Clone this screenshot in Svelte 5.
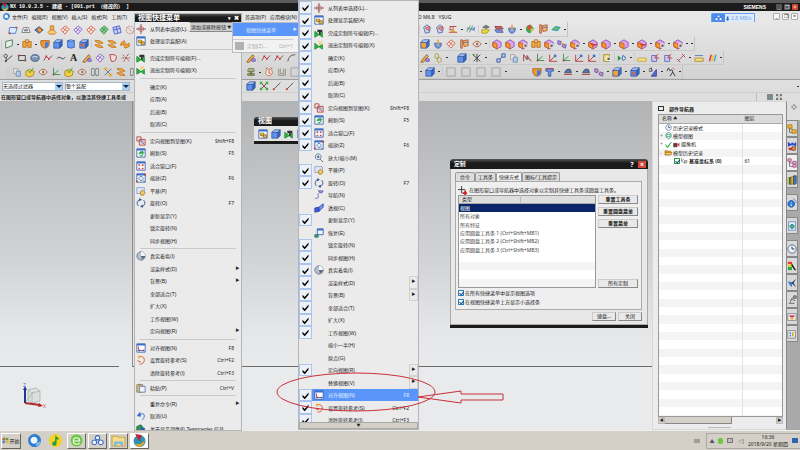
<script>
  const cube = (front, top, side) => [
    ['M1 4h7v7H1z', front, '#3c5c9c'],
    ['M1 4l3-3h7L8 4z', top, '#3c5c9c'],
    ['M8 4l3-3v7l-3 3z', side, '#3c5c9c'],
  ];
  const warm = [
    ['M1 4l5-3 5 3v5l-5 3-5-3z', '#d9a5ea', '#8a4fb0'],
    ['M1 4l5 2v6L1 9z', '#f79a2c', '#c25a18'],
  ];
  const sheet = (fill, line) => [['M1 6l5-5 5 4-5 6z', fill, line], ['M3.500 3.500l5 4M8 3l-4.500 5.500', '', line]];
  const win = [['M1 1h10v10H1z', '#fff', '#345ba6'], ['M1 1h10v2H1z', '#3d6fd0', '']];

  // shapes are [path, fill, stroke] on a 12 x 12 grid
  const icons = {
    sketch: [['M2 3h9L9 10H1z', '#dbeaff', '#3e73c4'], ['M1 9h2v2H1zM9 2h2v2H9z', '#d33', '']],
    dome: [['M1 9l2-6h6l2 6z', '#eee', '#777'], ['M4 7a2 2 0 0 1 4 0z', '#9db8d8', '#668']],
    diamond: [['M1 6l5-4 5 4-5 4z', '#4c82d6', '#2d4c94'], ['M5 3l5 3-3 3-3-3z', '#f2a33a', '#c46a1a']],
    stand: [['M4 1h4v6H4z', '#f5b14a', '#c07522'], ['M1 9l3-3h4l3 3-2 2H3z', '#f7cc7a', '#c07522']],
    mesh: sheet('#e6e9ff', '#8457b8'),
    redmesh: sheet('#ffe8dc', '#c95a4a'),
    green: sheet('#8ad08e', '#2d8a46'),
    blueGrid: [['M1 3l8-2 2 8-8 2z', '#c9d4ff', '#4a55c0'], ['M2 6l8-2M5 2l2 8', '', '#4a55c0']],
    ring: [['M6 1.500a4.500 4.500 0 1 0 .1 0zM2 2l8 8', '', '#d0665a', '2 1']],
    plane: [['M2 3l8-2v7l-8 3z', '#e6f2e6', '#3d6a50']],
    orange: [['M1 3h4v7H1zM7 3h4v7H7z', '#f7a93c', '#b56a18'], ['M4 1h4v3H4z', '#fbd68a', '#b56a18']],
    shield: [['M1 2h10v3q0 5-5 6-5-1-5-6z', '#f4982e', '#a85a16'], ['M6 4h4v5l-4 2z', '#3f7fe0', '']],
    blue: cube('#5c93ee', '#a9c9fb', '#2f66cc'),
    cyl: [['M2 2h8v8q-4 2-8 0z', '#6aa0f4', '#2f5cb8'], ['M2 2q4-2 8 0-4 2-8 0z', '#cfe1ff', '#2f5cb8']],
    hole: [...cube('#5c93ee', '#a9c9fb', '#2f66cc'), ['M4.500 6a1.500 1.500 0 1 0 .1 0z', '#f09a3a', '#b33']],
    bars: [['M1 2h6l4 3H5zM1 7h6l4 3H5z', '#f6b143', '#ba6c18']],
    bend: [['M1 5l4-3 2 5 4-2v4l-5 2-2-5-3 2z', '#f6a83c', '#ba6c18']],
    lineCircle: [['M2 1.500a2 2 0 1 0 .1 0zM3 5l-1 5 8-7', '', '#333'], ['M1 9h2v2H1z', '#444', '']],
    rect: [['M2 3h8v6H2z', '', '#333'], ['M1 2h2v2H1zM9 8h2v2H9z', '#a33', '']],
    disc: [['M1 6q0-4 5-4t5 4-5 4-5-4z', '#7d93b8', '#3c5078'], ['M3 5q3-2 6 0', '', '#dce6f4']],
    spline: [['M1 9l3-5 3 3 4-4', '', '#8b2f2f'], ['M3 3h2v2H3zM6 6h2v2H6z', '#d23', '']],
    wave: [['M1 7q2-4 5-1t5-1', '', '#333']],
    dshape: [['M2 2q9-1 8 4-1 5-6 4z', '#f5dada', '#a33']],
    cross: [['M2 2l8 8M9 1L3 11M1 6h10', '', '#a14848', '3 1']],
    pen: [['M2 9l6-7 2 2-6 7-3 0z', '#efb04c', '#8a5a2a'], ['M7 7h4v3H7z', '#b9a0e8', '#6b4aa8']],
    copy: [['M2 2h5v6H2z', '#eee', '#999'], ['M5 5h5v6H5z', '#b9cce8', '#6b86b0']],
    box: [['M1 5l4-2 6 2-1 5-5 2-4-2z', '#f5cf45', '#ab8218'], ['M4 4l2 3 4-6', '', '#2aa044']],
    mirror: [['M2 2h3v8H2zM7 2h3v8H7z', '#f2f2f2', '#666']],
    axes: [['M3 1v8h8M3 9l6-5', '', '#2c8a44'], ['M2 8h2v2H2z', '#c33', '']],
    tools: [['M2 2l8 8M10 2l-8 8', '', '#47689c'], ['M1 1h4v3H1zM7 8h4v3H7z', '#eeac3c', '']],
    eye: [['M1 6q5-7 10 0-5 7-10 0z', '#f4dfd0', '#a35a3a'], ['M5 4.500h2.500v3H5z', '#777', '']],
    knot: [['M2 4l4-3 4 3-1 6-5 1z', '#c8d8f4', '#4468b0'], ['M4 5l5-2-1 5z', '#f2a0a0', '#c44']],
    stamp: [['M1 10h10M2 3h8M6 3v6M3 3l-1 4h3', '', '#b33a22'], ['M3 8h6v2H3z', '#e9a23a', '']],
    curves: [['M1 9l4-7M4 10l4-8M1 5l9 2', '', '#3a8c6c'], ['M7 6l4-3-1 6z', '#6a89dc', '']],
    layers: [['M1 4l5-3 5 3-5 2z', '#777', ''], ['M1 7h9l-3 4H1z', '#e9dd3e', '#a89a20']],
    sheets: [['M1 3h8l2 3H3z', '#cf6a6a', '#8a3a3a'], ['M1 7h8l2 3H3z', '#8595d8', '#4a5aa0']],
    vase: [['M2 5h8q0 6-4 6T2 5z', '#6f9fe8', '#3a62b0'], ['M5 1h2v7H5z', '#f0a23a', '']],
    rainbow: [['M1 5q2-5 6-4l4 5-5 5q-5-1-5-6z', '#3ba65a', ''], ['M2 4q2-3 5-3l1 4-3 2z', '#e34a30', ''], ['M7 5l4 1-4 4z', '#f2c736', '']],
    grad: [['M2 1h2v10H2zM5 2l6-1v7l-5 1z', '#f3b46c', '#a8583a'], ['M6 4h5', '', '#466bc0']],
    flat: [['M1 7l4-4 6 1-3 4z', '#58c46a', '#2e8db8']],
    mix: cube('#f0a03c', '#bcd2fa', '#3e6fd0'),
    warm,
    warmDot: [...warm, ['M7 6h4v4H7z', '#666', '#fff']],
    warmRed: [...warm, ['M3 6l7 1M5 9l6-3', '', '#c22']],
    arrows: [['M1 2l4 1-1 4-3-1zM7 6l4 1-1 4-4-2z', '#b09be0', '#6a4aa8'], ['M4 4l5 4', '', '#e08c2c']],
    chain: [['M3 1q4-1 4 2L5 7Q1 6 3 1zM6 5q4 0 4 3 0 4-4 3-2-2 0-6z', '', '#a59f32']],
    axisX: [['M1 2l9 8M10 2L2 10M6 1v10', '', '#333'], ['M1 1h2v2H1z', '#393', '']],
    link: [['M2 10l8-8', '', '#34569c'], ['M1 7h4v4H1zM7 1h4v4H7z', '#b7c9ee', '#34569c']],
    redAxes: [['M2 2v8h9M2 10l6-6', '', '#b62f2f'], ['M7 2h3v3H7z', '#356dd0', '']],
    redZig: [['M2 10V2l4 6V3l5 7', '', '#a8262c'], ['M5 5h3v3H5z', '#777', '']],
    note: [['M2 2h7v8H2z', '#f5e28a', '#998230'], ['M6 5h4v4H6z', '#666', '#fff']],
    play: [['M1 3l4 3-4 4z', '#2a9a48', ''], ['M7 3q4 1 3 4T6 8z', '#dfe6fb', '#34569c']],
    ruler: [['M1 6h10v4H1z', '#f0dc80', '#a88c2a'], ['M1 3h10', '', '#5577c0']],
    yellowRuler: [['M1 6h10v4H1z', '#f0dc80', '#c4ab4a']],
    clockR: [['M2 3h6v7H2z', '#c8cff2', '#6a58b8'], ['M5 6l5-5M6 6h5', '', '#c33']],
    dumb: [['M2 10l8-8M1 7l4 4M7 1l4 4', '', '#a33a58']],
    spectrum: [['M2 10l2-8h2l-2 8z', '#e0413a', ''], ['M5 10l2-8h2l-2 8z', '#eec82c', ''], ['M8 10l2-8h1.500l-2 8z', '#2ca0d0', '']],
    tSurf: [['M1 2h9v3H7v6H4V5H1z', '#6a9ae6', '#34569c'], ['M1 2h9', '', '#c33']],
    swoosh: [['M2 7q2-6 7-4l1 4z', '#4a78b8', '#444'], ['M1 9h10', '', '#b33']],
    measure: [['M1 3L4 1l1 4M1 5h4', '', '#333'], ['M4 11l6-8v8z', '#5b6fd0', '#2c3a94']],
    dim: [['M1 5l2-4 2 4', '', '#333'], ['M5 4q3-2 3 2l3 5M8 6l-3 5', '', '#222'], ['M8 1l2 2', '', '#c33']],
    frame: [['M1 1h10v10H1z', '', '#9c9c9c']],
    gem: [['M3 2h6l1 3-4 1-4-1zM2 10h8V8H2zM5 5h2v4H5z', '#b8c49a', '#5d6e3a']],
    alarm: [['M6 2.500a4 4 0 1 0 .1 0z', '#f6e6d8', '#c0704a'], ['M6 4v3l2 1M2 2l2-1M10 2L8 1', '', '#b33']],
    tray: [['M2 2v8h8V2M4 2v6h4V2', '', '#8c8a6a']],
    line: [['M2 10l8-8', '', '#444'], ['M1 9h2v2H1z', '#b33', '']],
    dots: [['M2 2l8 8M10 2l-8 8', '', '#333'], ['M1 1h3v3H1zM8 1h3v3H8zM1 8h3v3H1zM8 8h3v3H8z', '#46a83c', ''], ['M5 5h2v2H5z', '#c33', '']],
    arc: [['M1 10q1-8 9-8', '', '#444']],
    target: [['M6 0v12M0 6h12', '', '#7a4040'], ['M6 3a3 3 0 1 0 .1 0z', '', '#c05050']],
    asm: [...win, ['M3 5h4v3H3zM6 7h4v3H6z', '#f3c545', '#94701c']],
    finish: [['M1 4v7l5-3 4 3V5L6 8z', '#2fb648', '#1c8a32'], ['M4 2h6v3H8v3H6V5H4z', '#333', '']],
    exit: [['M1 4v7l5-3 4 3V5L6 8z', '#2fb648', '#1c8a32'], ['M5 1l5 5M10 1L5 6', '', '#eec41e']],
    orient: [['M4 4h7v7H4z', '#f7dada', '#b33c3c'], ['M1 1h5v5H1zM6 6l4 4', '', '#b33c3c'], ['M6 5h3v4H6z', '#8fa6d8', '']],
    refresh: [...win, ['M3.500 6.500q1-3 4-2l0-1 2 2-2 2v-1q-2-1-3 1zM8.500 7.500q-1 3-4 2', '#36a852', '#36a852']],
    fit: [...win, ['M3 4h2v2H3zM7 4h2v2H7zM3 8h2v2H3zM7 8h2v2H7z', '#d0453e', '']],
    zoom: [...win, ['M6 4a2.500 2.500 0 1 0 .1 0zM8 9l3 2', '#e4f0fb', '#4a6f98'], ['M0 9h2v2H0zM10 1h2v2h-2z', '#c33', '']],
    lens: [['M5 1a3.500 3.500 0 1 0 .1 0z', '#dfeaf6', '#5874a0'], ['M7 7l4 4', '', '#5a5a6a'], ['M3.500 4.500h3M5 3v3', '', '#345']],
    pan: [['M1 2h9v7H1z', '#dfe8fa', '#8c9cc4'], ['M5 7l3-2 3 3-2 3H6z', '#f2c66a', '#a87f2c']],
    rotate: [['M3 9.500A4.200 4.200 0 0 1 5 2M9 2.500A4.200 4.200 0 0 1 7 10', '', '#24468c'], ['M4 0l3 2-3 2zM8 8l-3 2 3 2z', '#24468c', '']],
    nav: [['M1 10q6 0 4-3t5-5', '', '#6d5fb0'], ['M5 1h6l-2 3z', '#a9a0d8', '#6d5fb0']],
    persp: [['M1 6l5-1v5l-5 1z', '#3f5ee0', '#2a3ea8'], ['M6 5l5-4v4l-5 5z', '#7d95f4', '#2a3ea8']],
    restore: [['M4 1h7v7H4z', '#eef4ff', '#345ba6'], ['M4 1h7v2H4z', '#3d6fd0', ''], ['M1 8h4v3H1z', '#3ba68a', '#24705e']],
    globe: [['M6 1a5 5 0 1 0 .1 0z', '#b7c0cc', '#6c7684'], ['M6 1a5 5 0 0 1 5 5H6z', '#f3f6fa', ''], ['M6 6h5a5 5 0 0 1-4 4z', '#59697e', '']],
    align: [...win, ['M3 4v5h6', '', '#c33'], ['M3 8h2v2H3zM8 8h2v2H8z', '#345ba6', '']],
    spin: [['M3 2q7-1 7 4t-6 5M2 6q0 3 4 2', '', '#d5502a'], ['M2 1h4L3 5z', '#eeb02a', '']],
    paste: [['M1 2h7v9H1z', '#dcc48a', '#8a7234'], ['M4 4h7v7H4z', '#eef3fb', '#5a77b0'], ['M3 1h3v2H3z', '#888', '']],
    undo: [['M3 5q7-4 7 1 0 3-3 5', '', '#2f6ad0'], ['M1 6l4-5 1 6z', '#2f6ad0', '']],
    about: [['M1 3l5-2 3 4-4 6-4-3z', '#2c9c54', '#164'], ['M6 4l5 1-1 6-5-1z', '#2d5cc0', ''], ['M2 7h4v4H3z', '#d33', '']],
    tree: [['M3 2v8h3M3 6h4', '', '#666'], ['M1 1h5v4H1zM6 7h5v4H6z', '#f3b92e', '#a67a18']],
    constraint: [['M1 1l4 3v-2l3 0v2l3-3v6L8 5H5L1 7z', '#2b48c4', ''], ['M2 8h4v3H2z', '#c33', ''], ['M6 7h4v4H6z', '#e8ac26', '#833']],
    part: [['M3 2v8h4M3 6h4', '', '#666'], ['M1 1h4v3H1zM7 4h4v3H7zM7 8h4v3H7z', '#eab6d6', '#a34a82']],
    books: [['M1 3h2v8H1z', '#e0d53a', '#a98'], ['M3 3h2v8H3z', '#3ba03c', '#263'], ['M5 2h3v9H5z', '#f0a820', '#b73'], ['M8 1h3v9l-1 1H8z', '#3d82d8', '#246']],
    info: [['M5 3a4 4 0 1 0 .1 0z', '#2f7ad6', '#1c50a0'], ['M4.500 5h1v1h-1zM4.500 7h1v3h-1z', '#fff', ''], ['M7 1q4 1 4 5', '', '#4c89d8']],
    web: [['M2 1h8v10H2z', '#f2f7ff', '#5b84b8'], ['M6 4a2.500 2.500 0 1 0 .1 0z', '#44b06a', '#2a78b0']],
    clock: [['M6 1a5 5 0 1 0 .1 0z', '#e9f0fa', '#4a648c'], ['M6 3v3h3', '', '#223']],
    palette: [['M1 1h5v3H1z', '#e33', ''], ['M1 4h5v3H1z', '#f1dc22', ''], ['M1 7h5v4H1z', '#2aa84a', ''], ['M6 3l5 8H9L5 5z', '#222', '']],
    cut: [['M1 4l5 1v6L3 8z', '#3f7bd0', ''], ['M5 6l6-5-3 5 3 5z', '#27456f', '']],
    robot: [['M2 10h7M4 9l1-4 4-3M5 5l5 2', '', '#5c5c5c'], ['M8 1h3v3H8z', '#aaa', '#555']],
    role: [['M1 2h10v8H1z', '#f7f7f7', '#777'], ['M3 4h6v2H3z', '#c33a6c', ''], ['M4 6h4v3H4z', '#e8b04a', '']],
    sheetList: [['M1 2h9v9H1z', '#f7f7f7', '#777'], ['M3 4h2v2H3zM3 7h2v2H3z', '#3a84d0', ''], ['M6 4h2v5H6z', '#e2a030', '']],
    gear: [['M6 2.500a3.500 3.500 0 1 0 .1 0z', '', '#444'], ['M6 0v2M6 10v2M0 6h2M10 6h2', '', '#444']],
    check: [['M1 6l3 4 7-8-6 9h-1z', '#22a636', '#22a636']],
    camera: [['M1 4h6v6H1z', '#7a3a44', '#422'], ['M7 6l4-3v7z', '#c04a4a', '']],
    folder: [['M0 3h4l1 1h5v6H0z', '#e8a21e', '#96640c'], ['M2 6h10l-2 4H0z', '#fcd666', '#96640c']],
    viewTree: [['M6 1a5 5 0 1 0 .1 0z', '#d8f2e4', '#2a9468'], ['M3 4h6v4H3z', '', '#287']],
    csys: [['M1 1v6l6 4M1 7l4-4', '', '#555'], ['M6 6h4v4H6z', '#ccc', '#666']],
    windows: [['M1 2l4-1v4L1 6z', '#d9532c', ''], ['M6 1l5 1v4L6 5z', '#5ba63a', ''], ['M1 7l4-1v4l-4 1z', '#3d7cd0', ''], ['M6 6l5 1v4l-5-1z', '#f2b824', '']],
    browser: [['M6 0a6 6 0 1 0 .1 0z', '#2d7fd4', ''], ['M5.500 2.500a3.200 3.200 0 1 0 .1 0z', '#f2f7fc', ''], ['M8 8q3 0 4-2-1 5-5 5z', '#7cc3f4', '']],
    music: [['M6 0a6 6 0 1 0 .1 0z', '#f6d222', ''], ['M6 1q1 2 3 3v1L7 5v4a2 2 0 1 1-1.500-2z', '#219a4c', '']],
    e360: [['M6 .5a5.500 5.500 0 1 0 .1 0z', '#6cc644', ''], ['M3 6.500h6q0-3-3-3t-3 3 3 3q2 0 3-1', '', '#fff']],
    cloud: [['M6 1.500a2 2 0 1 0 .1 0zM3 5.500a2.200 2.200 0 1 0 .1 0zM9 5.500a2.200 2.200 0 1 0 .1 0z', '#fff', '#2d63cc']],
    explorer: [['M0 2h5l1 1h6v8H0z', '#f4dc8a', '#c9a54a'], ['M2 7h8v4H8V9H4v2H2z', '#72bde8', '']],
    nx: [['M6 1a5.500 5.500 0 1 0 .1 0z', '#2c92b4', ''], ['M1 8q6 4 10-3-1 7-6 7z', '#eda61e', ''], ['M2 0l6 1-2 6z', '#c8202c', '']],
  };

  const menuItems = {
    list: ['从列表中选择(L)...', 'target'],
    asm: ['处理显示装配(A)', 'asm'],
    finish: ['完成定制符号编辑(F)...', 'finish'],
    exit: ['退出定制符号编辑(X)', 'exit'],
    ok: ['确定(K)'], apply: ['应用(A)'], back: ['后退(B)'], cancel: ['取消(C)'],
    orientSketch: ['定向视图到草图(K)', 'orient', 'Shift+F8'],
    refresh: ['刷新(S)', 'refresh', 'F5'],
    fit: ['适合窗口(F)', 'fit'],
    zoom: ['缩放(Z)', 'zoom', 'F6'],
    lens: ['放大/缩小(M)', 'lens'],
    pan: ['平移(P)', 'pan'],
    rotate: ['旋转(O)', 'rotate', 'F7'],
    nav: ['导航(N)', 'nav'],
    persp: ['透视(C)', 'persp'],
    update: ['更新显示(Y)'],
    restore: ['恢复(E)', 'restore'],
    lock: ['锁定旋转(N)'],
    sync: ['同步视图(H)'],
    shade: ['真实着色(I)', 'globe'],
    render: ['渲染样式(D)', '', '', true],
    bg: ['背景(B)', '', '', true],
    fitAll: ['全部适合(T)'],
    expand: ['扩大(X)'],
    work: ['工作视图(W)'],
    half: ['缩小一半(H)'],
    origin: ['原点(G)'],
    orient: ['定向视图(R)', '', '', true],
    replace: ['替换视图(V)', '', '', true],
    align: ['对齐视图(N)', 'align', 'F8'],
    setRef: ['设置旋转参考(S)', 'spin', 'Ctrl+F2'],
    clearRef: ['清除旋转参考(I)', '', 'Ctrl+F3'],
    paste: ['粘贴(P)', 'paste', 'Ctrl+V'],
    repeat: ['重复命令(R)', '', '', true],
    undo: ['取消(U)', 'undo'],
    about: ['关于显示部件的 Teamcenter 信息', 'about'],
  };

  let index = 0;
  const shortcutMenu = 'list asm - finish exit - ok apply back cancel - orientSketch refresh fit zoom pan rotate update lock sync = shade render bg fitAll expand work orient - align setRef clearRef = paste = repeat undo about'
    .split(' ')
    .map((key) =>
      key === '-' || key === '=' ? { sep: true, thin: key === '=' } : { item: menuItems[key], tall: index++ % 2 === 0 }
    );

  const unchecked = ['lens', 'nav', 'persp', 'restore', 'half', 'origin', 'replace'];
  let buttonMenu = $state(
    'list asm finish exit ok apply back cancel orientSketch refresh fit zoom lens pan rotate nav persp update restore lock sync shade render bg fitAll expand work half origin orient replace align setRef clearRef'
      .split(' ')
      .map((key) => ({ key, item: menuItems[key], checked: !unchecked.includes(key) }))
  );

  const toolbars = [
    [
      '_ sketch dome diamond stand redmesh mesh redmesh green blueGrid ring',
      'pen mesh green blueGrid',
      '| knot knot stamp . curves | layers sheets vase . rainbow grad flat .',
    ],
    [
      '| plane . orange . shield blue cyl hole | bars bars bend',
      'warm mix blue warm',
      'mix vase redmesh grad eye . | warm warm warmDot orange warmDot arrows warmDot . warmRed warm . warm . warmRed . warmDot . warmDot . .',
    ],
    [
      '| lineCircle rect disc spline wave A pen mesh dshape cross',
      'pen | spline spline arc',
      'pen chain . _ blue | axisX . _ link copy redZig axes redAxes axes redAxes redAxes | note | play . | yellowRuler clockR clockR dumb . ruler spectrum .',
    ],
    [
      '_ | | copy box eye axes box eye mirror tools bars mirror',
      'gem . alarm tray frame',
      '. blue . | [ [ [ [ . = shield tSurf . swoosh . swoosh arrows . mix . hole . measure . dim .',
    ],
  ].map((row) => row.map((group) => group.split(' ')));

  const mainMenu = ['文件(F)', '编辑(E)', '视图(V)', '插入(S)', '格式(R)', '工具(T)'];
  const resourceTabs = ['tree', 'constraint', 'part', 'books', 'info', 'web', 'clock', 'palette', 'cut', 'robot', 'role', 'sheetList'];
  const listRows = ['视图', '所有对象', '所有特征', '应用圆盘工具条 1 (Ctrl+Shift+MB1)', '应用圆盘工具条 2 (Ctrl+Shift+MB2)', '应用圆盘工具条 3 (Ctrl+Shift+MB3)', '', '', '', ''];
  const emptyRows = Array.from({ length: 31 });
  let selected = $state(0);
  let showInMenus = $state(true);
  let showBar = $state(true);
</script>

{#snippet icon(name)}
  <svg class="icon" viewBox="0 0 12 12" aria-hidden="true">
    {#each icons[name] as [d, fill, stroke, dash]}
      <path {d} fill={fill || 'none'} stroke={stroke || 'none'} stroke-dasharray={dash} />
    {/each}
  </svg>
{/snippet}

{#snippet tools(group)}
  {#each group as t}
    {#if t === '.'}<span class="drop"></span>
    {:else if t === '|'}<span class="grip"></span>
    {:else if t === '_'}<span class="gap"></span>
    {:else if t === '='}<span class="space"></span>
    {:else if t === '['}<button class="tool wide" aria-label="frame">{@render icon('frame')}</button>
    {:else if t === 'A'}<button class="tool letter">A</button>
    {:else}<button class="tool" aria-label={t}>{@render icon(t)}</button>
    {/if}
  {/each}
{/snippet}

<div class="screen">
  <header class="titlebar">
    {@render icon('nx')}
    <span class="caption">NX 10.0.3.5 - 建模 - [001.prt （修改的） ]</span>
    <b class="brand">SIEMENS</b>
    <span class="winbtns">
      <button aria-label="minimize">_</button><button aria-label="restore">❐</button><button class="close" aria-label="close">×</button>
    </span>
  </header>

  <nav class="menubar">
    <div class="menus first">
      {@render icon('browser')}
      {#each mainMenu as m}<a href="#menu">{m}</a>{/each}
    </div>
    <div class="menus second"><a href="#menu">首选项(P)</a><a href="#menu">应用模块(N)</a></div>
    <div class="menus"><a href="#menu">D M6.8</a><a href="#menu">YSUG</a></div>
    <div class="speed">
      <span class="cloud">{@render icon('cloud')}</span><i>⬇</i><span>2.8 MB/s</span>
    </div>
    <span class="winbtns light">
      <button aria-label="minimize">_</button><button aria-label="restore">❐</button><button aria-label="close">×</button>
    </span>
  </nav>

  <div class="toolbars">
    {#each toolbars as row}
      <div class="toolbar">
        <div class="left">{@render tools(row[0])}</div>
        <div class="mid">{@render tools(row[1])}</div>
        <div class="right">{@render tools(row[2])}</div>
      </div>
    {/each}
  </div>

  <div class="filters">
    <div class="left">
      <span class="combo"><select aria-label="选择过滤器"><option>无选择过滤器</option></select><b></b></span>
      <span class="combo"><select aria-label="选择范围"><option>整个装配</option></select><b></b></span>
    </div>
    <div class="mid">{@render tools(['blue', 'dots', 'line', 'line', 'arc'])}</div>
    <span class="drop end"></span>
  </div>

  <div class="prompt">
    <b>在图形窗口或导航器中选择对象，以激活其快捷工具条或</b>
    <span class="squares"><i></i><i></i></span>
  </div>

  <main>
    <section class="viewport">
      <div class="part left-part"></div>
      <div class="part right-part"></div>
      <svg class="triad" viewBox="0 0 26 26">
        <path d="M6 6l8-2 4 3v10l-8 2-4-3zM6 6l4 3 8-2M10 9v10" fill="#dcdedf" stroke="#b4bab6" />
        <path d="M3 19l9-12" stroke="#9acb9a" />
        <path d="M3 19V5" stroke="#183c94" stroke-width="2" />
        <path d="M1 6l2-4 2 4z" fill="#183c94" />
        <path d="M3 19l15 2" stroke="#b0272c" stroke-width="2" />
        <path d="M17 19l4 3-5 1z" fill="#b0272c" />
        <text x="1" y="3" fill="#4a78c8">Z</text>
        <text x="21" y="24" fill="#d04a4a">X</text>
      </svg>
    </section>

    <aside class="navigator">
      <h2><i></i>部件导航器</h2>
      <div class="sheet">
        <table>
          <thead><tr><th>名称 <small>▲</small></th><th>图层</th></tr></thead>
          <tbody>
            <tr><td><span class="node n1">{@render icon('clock')}历史记录模式</span></td><td></td></tr>
            <tr><td><span class="node"><u>+</u>{@render icon('viewTree')}模型视图</span></td><td></td></tr>
            <tr><td><span class="node"><u>+</u>{@render icon('check')}{@render icon('camera')}摄像机</span></td><td></td></tr>
            <tr><td><span class="node"><u>-</u>{@render icon('folder')}模型历史记录</span></td><td></td></tr>
            <tr><td><span class="node n2"><label><input type="checkbox" checked />{@render icon('csys')}基准坐标系 (0)</label></span></td><td>61</td></tr>
            {#each emptyRows as _}<tr><td></td><td></td></tr>{/each}
          </tbody>
        </table>
      </div>
      <div class="hscroll"><button aria-label="left">◀</button><span></span><button class="r" aria-label="right">▶</button></div>
      <div class="splitter"></div>
    </aside>

    <div class="resource">
      <div class="cog">{@render icon('gear')}</div>
      {#each resourceTabs as tab, i}
        <button class:active={i === 2} class:apart={i > 3 && i < 7} aria-label={tab}>{@render icon(tab)}</button>
      {/each}
    </div>
  </main>

  <footer class="taskbar">
    <button class="start">{@render icon('windows')}开始</button>
    <button class="app flat" aria-label="browser">{@render icon('browser')}</button>
    <button class="app flat" aria-label="music">{@render icon('music')}</button>
    <button class="app" aria-label="e360">{@render icon('e360')}</button>
    <button class="app" aria-label="cloud">{@render icon('cloud')}</button>
    <button class="app" aria-label="explorer">{@render icon('explorer')}</button>
    <button class="app on" aria-label="nx">{@render icon('nx')}</button>
    <span class="kbd"></span>
    <div class="systray">
      <span>▲</span>
      <span class="plug"></span><span class="net"></span><span>◁)</span>
      <time>16:36<br />2018/9/20 星期四</time>
      <span class="desk"></span>
    </div>
  </footer>

  <div class="float">
    <h3>视图</h3>
    <div>{@render tools(['asm', 'blue', 'finish', 'asm', 'fit', 'zoom', 'pan'])}</div>
  </div>

  <div class="menu shortcut">
    <h3>视图快捷菜单<span>▾</span><button aria-label="close">✖</button></h3>
    <ul>
      {#each shortcutMenu as row}
        {#if row.sep}
          <li class="sep" class:thin={row.thin}></li>
        {:else}
          <li class:tall={row.tall}>
            <span class="pic">{#if row.item[1]}{@render icon(row.item[1])}{/if}</span>
            <span class="name">{row.item[0]}</span>
            <span class="key">{row.item[2] || ''}</span>
            <span class="sub">{row.item[3] ? '▶' : ''}</span>
          </li>
        {/if}
      {/each}
    </ul>
  </div>

  <button class="addremove">添加或移除按钮 <small>▼</small></button>

  <div class="submenu">
    <div class="hot"><span>视图快捷菜单</span><small>▶</small></div>
    <div class="off"><i></i><span>定制(Z)...</span><em>Ctrl+1</em></div>
  </div>

  <div class="menu buttons">
    <ul>
      {#each buttonMenu as row, i}
        <li class:tall={i % 2 === 0} class:hot={row.key === 'align'}>
          <button class="tick" class:checked={row.checked} aria-label={row.item[0]} aria-pressed={row.checked} onclick={() => (row.checked = !row.checked)}>
            {#if row.checked}<svg viewBox="0 0 12 12"><path d="M2 5l3 3 5-6v3L5 11 2 8z" fill="#000" /></svg>{/if}
          </button>
          <span class="pic">{#if row.item[1]}{@render icon(row.item[1])}{/if}</span>
          <span class="name">{row.item[0]}</span>
          <span class="key">{row.item[2] || ''}</span>
          <span class="sub" class:boxed={row.item[3]}>{row.item[3] ? '▶' : ''}</span>
        </li>
      {/each}
    </ul>
    <button class="more" aria-label="more">▼</button>
  </div>

  <div class="dialog" role="dialog" aria-label="定制">
    <h3>定制<button class="help">?</button><button class="close" aria-label="close">×</button></h3>
    <div class="body">
      <div class="tabs">
        <button>命令</button><button>工具条</button><button class="active">快捷方式</button><button>图标/工具提示</button>
      </div>
      <div class="page">
        <p>
          <svg viewBox="0 0 10 10"><path d="M4 0v8M0 4h8" stroke="#333" /><path d="M8 5v5M5 8h5" stroke="#c22" stroke-width="2" /></svg>
          在图形窗口或导航器中选择对象以定制其快捷工具条或圆盘工具条。
        </p>
        <div class="cols">
          <table>
            <thead><tr><th>类型</th><th></th></tr></thead>
            <tbody>
              {#each listRows as row, i}
                <tr class:selected={selected === i} onclick={() => (selected = i)}><td colspan="2">{row}</td></tr>
              {/each}
            </tbody>
          </table>
          <div class="actions">
            <button>重置工具条</button><button>重置圆盘菜单</button><button>重置菜单</button><button class="all">所有定制</button>
          </div>
        </div>
        <label><input type="checkbox" bind:checked={showInMenus} />在所有快捷菜单中显示视图选项</label>
        <label><input type="checkbox" bind:checked={showBar} />在视图快捷菜单上方显示小选择条</label>
      </div>
      <div class="bottom"><button>键盘...</button><button>关闭</button></div>
    </div>
  </div>

  <svg class="marks" viewBox="0 0 230 42">
    <ellipse cx="80" cy="21" rx="79" ry="19" />
    <path d="M142 26l43-6v3h42v6h-42v3z" />
  </svg>
</div>

<style>
:global(body) { background: #e8eaec; }
.screen {
  position: relative;
  display: flex;
  flex-direction: column;
  height: 100vh;
  overflow: hidden;
  color: #222;
  font: 5px/8px "Noto Sans", "Noto Sans CJK SC", sans-serif;
}
.screen * { box-sizing: border-box; }
button, select, input {
  margin: 0;
  padding: 0;
  border: 0;
  background: none;
  color: inherit;
  font: inherit;
}
h2, h3, p, ul { margin: 0; padding: 0; list-style: none; font-weight: normal; }
a { color: inherit; text-decoration: none; }
small { font-size: 4px; }
.icon { display: block; width: 10px; height: 10px; flex: none; overflow: visible; }

.titlebar {
  display: flex;
  align-items: center;
  flex: none;
  height: 11px;
  padding: 0 2px 0 1px;
  border-top: 3px solid #5b5b5b;
  background: #1b1b1b;
  color: #fff;
}
.titlebar .icon { width: 8px; height: 8px; }
.caption { flex: 1; padding-left: 1px; font-family: "Liberation Mono", "Noto Sans CJK SC", monospace; font-weight: bold; white-space: pre; }
.brand { margin-right: 10px; font-family: "Liberation Sans", sans-serif; }
.winbtns { display: flex; gap: 2px; }
.winbtns button { width: 6px; height: 6px; background: #555; border-radius: 1px; line-height: 5px; font-size: 5px; }
.winbtns .close, .dialog .close { background: #cf4a38; color: #fff; }
.winbtns.light button { background: #f8f8f8; border: 1px solid #aaa; width: 7px; height: 7px; line-height: 5px; }

.menubar { display: flex; align-items: center; flex: none; height: 11px; padding-right: 2px; background: #e7e7e7; }
.menus { display: flex; gap: 4px; white-space: nowrap; }
.menus .icon { width: 7px; height: 7px; margin-right: -2px; }
.menus.first { flex: 0 0 245px; padding-left: 3px; }
.menus.second { flex: 0 0 173px; gap: 4px; }
.speed {
  display: flex;
  align-items: center;
  height: 10px;
  width: 44px;
  margin: 2px 18px 0 auto;
  border: 1px solid #6aa0ee;
  border-radius: 1px;
  background: #dcebff;
  color: #7aa4e0;
  white-space: nowrap;
}
.speed .cloud { padding: 0 2px; height: 8px; background: #4a8cf0; }
.speed .icon { width: 9px; height: 8px; }
.speed i { margin-right: 1px; color: #2d6cd8; font-style: normal; }

.toolbars { flex: none; background: linear-gradient(#e7e7e7, #d2d2d2); border-bottom: 1px solid #9e9e9e; }
.toolbar { display: flex; height: 14px; }
.toolbar:first-child { height: 15px; }
.left, .mid, .right { display: flex; align-items: center; }
.left { flex: 0 0 244px; overflow: hidden; }
.mid { flex: 0 0 174px; }
.right { border-right: 1px solid #c4c4c4; border-bottom: 1px solid #cacaca; }
.tool { width: 13px; display: flex; justify-content: center; flex: none; }
.tool.wide { width: 15px; }
.tool.letter { display: block; font: bold 10px/12px "Liberation Serif", serif; }
.drop { flex: 0 0 5px; height: 1px; display: flex; justify-content: center; }
.drop::before { content: ""; width: 2px; height: 1px; background: #333; }
.grip { flex: 0 0 2px; height: 9px; border-right: 1px solid #cdcdcd; }
.gap { flex: 0 0 6px; }
.space { flex: 0 0 22px; }

.filters { display: flex; align-items: center; flex: none; height: 12px; background: #dedede; }
.filters .left { gap: 2px; padding-left: 2px; }
.combo { position: relative; width: 61px; height: 9px; }
.combo:last-child { width: 65px; }
.combo select { width: 100%; height: 9px; appearance: none; background: #fff; border: 1px solid #a5b5c8; line-height: 7px; }
.combo b { position: absolute; top: 1px; right: 1px; width: 7px; height: 7px; background: #a8d0f2; pointer-events: none; }
.combo b::before { content: ""; position: absolute; left: 1px; top: 2px; border: 3px solid transparent; border-top-color: #124; border-bottom: 0; }
.end { margin-left: auto; }
.prompt { display: flex; justify-content: space-between; flex: none; height: 9px; padding: 0 18px 0 1px; border-top: 1px solid #cecece; background: #dedede; }
.squares { display: flex; gap: 3px; padding-left: 10px; border-left: 1px solid #bbb; }
.squares i { width: 6px; height: 6px; margin-top: 1px; background: #7d8b90; }
.squares i:last-child { background: #ccc; border: 2px dotted #777; }

main { display: flex; flex: 1; min-height: 0; }
.viewport {
  position: relative;
  display: flex;
  flex: 1;
  background: linear-gradient(#b2b3b5, #d2d3d5 48%, #e4e6e8 70%, #e8eaec 80%);
}
.part { height: 81%; border-bottom: 1px solid #6c6c6c; }
.left-part { flex: 0 0 119px; }
.right-part { flex: 1; margin-left: 13px; height: 81%; }
.left-part + .right-part { border-left: 1px solid #8c8e90; }
.triad { position: absolute; left: 22px; bottom: 20px; width: 26px; height: 26px; fill: none; overflow: visible; }
.triad text { font-size: 5px; }
.navigator {
  display: flex;
  flex-direction: column;
  flex: 0 0 135px;
  padding: 1px 3px 1px 5px;
  border: 1px solid #d8d8d8;
  border-right-color: #888;
  background: #ececec;
}
.navigator h2 { display: flex; align-items: center; gap: 5px; height: 11px; font-size: 5px; font-weight: bold; }
.navigator h2 i { width: 6px; height: 5px; border: 1px solid #333; }
.sheet { flex: 1; min-height: 0; overflow: hidden; border: 1px solid #999; background: #fff; }
table { border-collapse: collapse; width: 100%; table-layout: fixed; }
th, td { padding: 0; text-align: left; font-weight: normal; white-space: nowrap; }
.navigator th { height: 8px; background: #dadada; border-bottom: 1px solid #aaa; padding-left: 3px; line-height: 7px; }
.navigator th:first-child { width: 83px; }
.navigator th + th, .navigator td + td { border-left: 1px solid #e2e2e2; padding-left: 2px; }
.navigator tbody tr { height: 8px; }
.navigator tbody tr:nth-child(3n) { height: 9px; }
.navigator tbody tr:nth-child(even) { background: #f4f4f4; }
.navigator td { line-height: 8px; }
.node { display: flex; align-items: center; gap: 1px; height: 8px; padding-left: 1px; }
.node label { display: flex; align-items: center; gap: 1px; font-weight: bold; }
.node .icon { width: 7px; height: 7px; }
.node u { width: 4px; text-decoration: none; color: #777; }
.node.n1 { padding-left: 6px; }
.node.n2 { padding-left: 15px; }
input[type="checkbox"] { appearance: none; width: 6px; height: 6px; background: #fff; border: 1px solid #2c7fb8; position: relative; flex: none; }
input[type="checkbox"]:checked::before { content: ""; position: absolute; left: 1px; top: 0; width: 2px; height: 3px; border: solid #1a4a90; border-width: 0 1px 1px 0; transform: rotate(40deg); }
.node input { border-color: #2a9a3c; }
.hscroll { display: flex; height: 7px; background: #ececec; }
.hscroll button { width: 7px; background: #d4d0c8; border: 1px solid #bbb; font-size: 4px; line-height: 5px; }
.hscroll span { width: 67px; background: #d4d0c8; border: 1px solid #888; border-width: 0 1px 1px 0; }
.hscroll .r { margin-left: auto; }
.splitter { height: 4px; margin: 0 52px 0 50px; border-bottom: 1px solid #bbb; }
.resource { flex: 0 0 13px; background: #a9a9a9; }
.resource .cog { display: flex; justify-content: center; height: 19px; padding-top: 3px; background: #dedede; }
.resource .cog .icon { width: 6px; height: 6px; }
.resource button { display: flex; align-items: center; width: 11px; height: 17px; background: #d9d9d9; border: 1px solid #888; border-left: 0; }
.resource button.active { background: #f0f0f0; }
.resource .apart { margin-top: 6px; }

.taskbar { display: flex; align-items: center; gap: 2px; flex: none; height: 20px; padding-left: 1px; border-top: 1px solid #eee; background: #d4d0c8; }
.start, .app { display: flex; align-items: center; justify-content: center; height: 16px; width: 19px; border: 1px solid #fff; border-right-color: #666; border-bottom-color: #666; }
.start { width: 20px; margin-right: 2px; }
.start .icon { width: 7px; height: 7px; }
.app .icon { width: 13px; height: 13px; }
.app.flat { border: 0; }
.app.on { background: #fff; }
.kbd { width: 6px; height: 4px; margin: 0 4px 0 auto; background: #a09c96; }
.systray { display: flex; align-items: center; gap: 4px; height: 16px; padding: 0 2px; border: 1px solid #aaa; border-right: 0; color: #555; }
.plug { width: 5px; height: 6px; background: #6cc83c; border-radius: 2px; }
.net { width: 6px; height: 5px; border: 1px solid #777; background: #bbb; }
time { text-align: center; line-height: 7px; color: #222; }
.desk { width: 6px; height: 5px; background: #2f62b4; }

.float { position: absolute; left: 254px; top: 117px; width: 120px; background: #e4e4e4; border-bottom: 3px solid #1b1b1b; }
.float h3, .shortcut h3, .dialog h3 { background: linear-gradient(#555, #1a1a1a 40%); color: #fff; }
.float h3 { height: 9px; padding-left: 4px; border-radius: 2px 2px 0 0; font-size: 7px; font-weight: bold; line-height: 8px; }
.float div { display: flex; align-items: center; height: 15px; padding-left: 2px; }

.menu { position: absolute; background: #ebebeb; border: 1px solid #b5b5b5; overflow: hidden; }
.menu li { display: flex; align-items: center; height: 12px; line-height: 6px; white-space: nowrap; }
.menu li.tall { height: 13px; }
.pic { width: 14px; flex: none; }
.name { flex: 1; font-family: "Liberation Sans", "Noto Sans CJK SC", sans-serif; }
.sub { width: 8px; text-align: center; font-size: 4px; }
.shortcut { left: 134px; top: 13px; width: 108px; height: 418px; }
.shortcut h3 { display: flex; align-items: center; height: 8px; padding-left: 3px; font-size: 7px; font-weight: bold; }
.shortcut h3 span { margin-left: auto; font-size: 5px; }
.shortcut h3 button { width: 10px; font-size: 6px; line-height: 6px; }
.shortcut li { padding-left: 1px; }
.shortcut li.sep { height: 4px; padding: 0; margin: 0 5px; }
.shortcut li.thin { height: 3px; }
.shortcut li.sep::before { content: ""; flex: 1; height: 1px; background: #c9c9c9; }
.shortcut .sub { width: 7px; }
.addremove { position: absolute; left: 189px; top: 22px; padding: 0 1px; height: 10px; background: #cfcfcf; border: 1px solid #888; border-left-color: #eee; white-space: nowrap; }
.submenu { position: absolute; left: 232px; top: 22px; width: 68px; height: 31px; background: #f2f2f2; border: 1px solid #bbb; }
.submenu div { display: flex; align-items: center; height: 13px; }
.submenu .hot { padding: 0 2px 0 13px; justify-content: space-between; background: #5a96fa; color: #dfeaff; }
.submenu .off { margin: 3px 6px 0 0; border-top: 1px solid #ccc; color: #aaa; }
.submenu i { width: 9px; height: 8px; margin: 0 3px 0 2px; background: #b2b2b2; }
.submenu em { margin-left: auto; font-style: normal; }

.buttons { left: 298px; top: 0; width: 121px; height: 430px; display: flex; flex-direction: column; }
.buttons ul { flex: 1; min-height: 0; overflow: hidden; }
.buttons .hot { background: #5a96fa; color: #e6efff; }
.tick { width: 13px; height: 100%; margin-right: 2px; flex: none; }
.tick.checked { border: 1px solid #a9c5ee; background: #eef1f6; }
.tick svg { display: block; width: 9px; height: 9px; margin: 0 auto; }
.buttons .sub { width: 9px; align-self: stretch; line-height: 12px; }
.buttons .boxed { border: 1px solid #d0d0d0; line-height: 10px; }
.more { flex: none; height: 7px; background: #d4d0c8; border: 1px solid #aaa; font-size: 4px; line-height: 4px; }

.dialog { position: absolute; left: 450px; top: 159px; width: 198px; border-bottom: 3px solid #1b1b1b; border-radius: 3px 3px 0 0; overflow: hidden; background: #e8e8e8; }
.dialog h3 { display: flex; align-items: center; gap: 2px; height: 10px; padding: 0 2px 0 4px; font-weight: bold; }
.dialog h3 button { width: 8px; height: 7px; font-size: 7px; line-height: 7px; font-weight: bold; }
.dialog .help { margin-left: auto; }
.body { padding: 3px 5px 3px 4px; border: 1px solid #aaa; border-top: 0; }
.tabs { display: flex; }
.tabs button { height: 9px; padding: 0 4px; border: 1px solid #999; border-bottom: 0; border-radius: 2px 2px 0 0; background: #dcdcdc; }
.tabs button + button { padding: 0 2px; }
.tabs .active { background: #f2f2f2; }
.page { padding: 3px 3px 2px 2px; border: 1px solid #aaa; background: #efefef; }
.page p { display: flex; align-items: center; gap: 2px; height: 10px; white-space: nowrap; }
.page p svg { width: 9px; height: 9px; }
.cols { display: flex; gap: 2px; margin-bottom: 1px; }
.dialog table { flex: 1; border: 1px solid #999; background: #fff; }
.dialog th { height: 8px; padding-left: 3px; background: #dedede; border-bottom: 1px solid #aaa; line-height: 7px; }
.dialog th:first-child { width: 45%; border-right: 1px solid #bbb; }
.dialog td { height: 8px; padding-left: 1px; line-height: 8px; color: #444; }
.dialog tbody tr:nth-child(3n) td { height: 9px; }
.dialog tr:nth-child(n + 7):nth-child(even) { background: #f4f4f4; }
.dialog tr.selected { background: #0a246a; }
.dialog tr.selected td { color: #fff; }
.actions { display: flex; flex-direction: column; gap: 3px; width: 40px; }
.actions button, .bottom button { height: 9px; line-height: 7px; border: 1px solid #888; border-top-color: #ccc; border-left-color: #ccc; background: #e9e9e9; font-weight: bold; white-space: nowrap; }
.actions .all { margin-top: auto; font-weight: normal; }
.page label { display: flex; align-items: center; gap: 1px; height: 9px; }
.bottom { display: flex; justify-content: flex-end; gap: 2px; padding-top: 2px; }
.bottom button { width: 24px; font-weight: normal; }

.marks { position: absolute; left: 276px; top: 371px; width: 230px; height: 42px; fill: none; stroke: #c8303a; pointer-events: none; }
</style>
